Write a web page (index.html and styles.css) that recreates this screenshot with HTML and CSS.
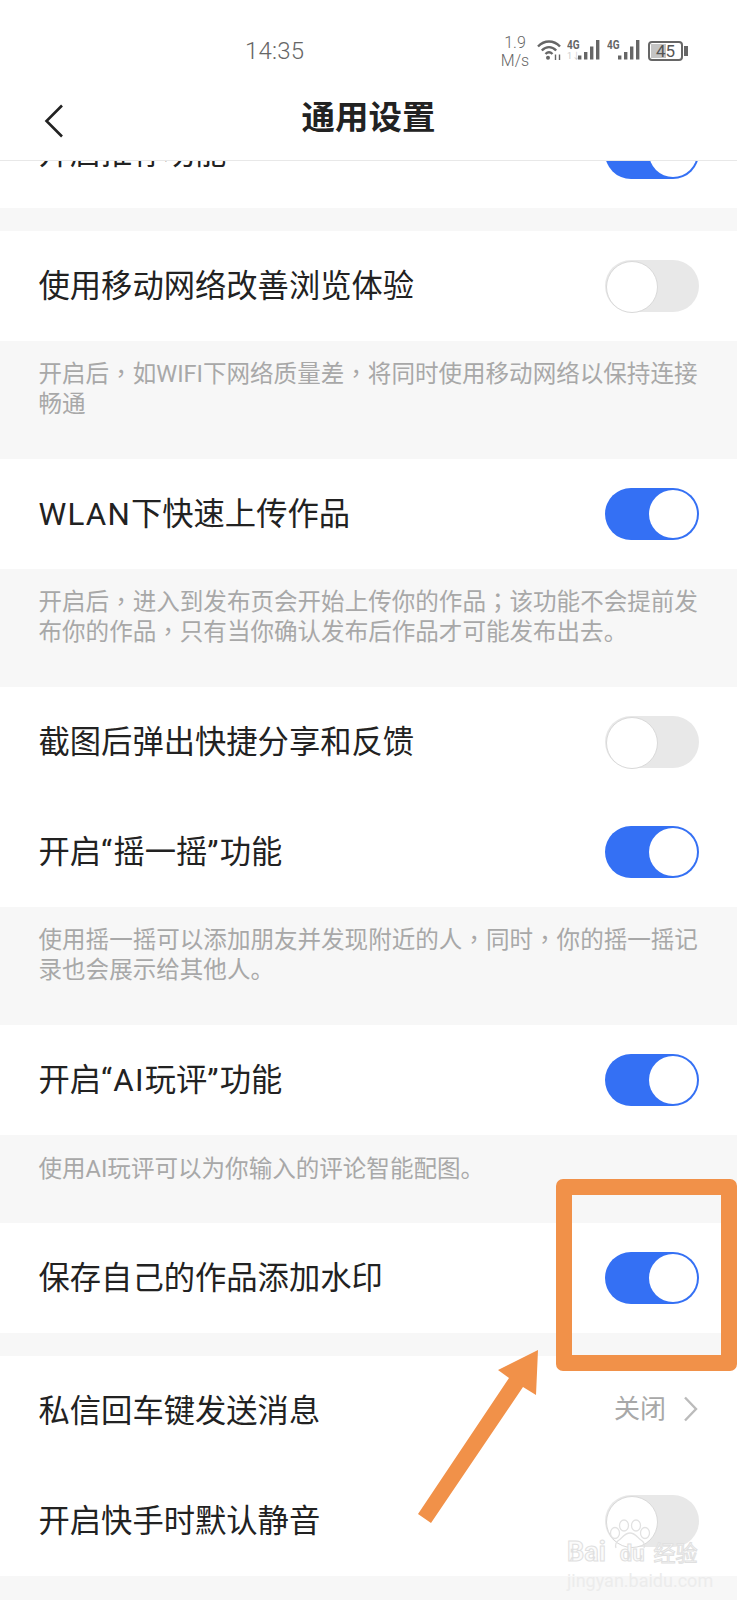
FILE: index.html
```html
<!DOCTYPE html>
<html lang="zh-CN">
<head>
<meta charset="utf-8">
<title>通用设置</title>
<link rel="stylesheet" href="styles.css">
</head>
<body>
<div class="phone">
  <header class="top">
    <div class="status">
      <span class="time">14:35</span>
      <div class="indicators">
        <span class="speed"><span>1.9</span><span>M/s</span></span>
        <svg class="wifi" width="25" height="22" viewBox="0 0 25 22" fill="none" stroke="#666" stroke-width="2.4">
          <path d="M1 7.5C7.5 .8 16.5 .8 23 7.5"/>
          <path d="M4.8 11.5C9.2 7 14.8 7 19.2 11.5"/>
          <path d="M8.5 15C10.8 12.8 13.2 12.8 15.5 15"/>
          <circle cx="11" cy="18.8" r="2" fill="#666" stroke="none"/>
          <path d="M18.5 15.5v5.5M22.5 15.5v5.5" stroke-width="1.4"/>
        </svg>
        <span class="signal">
          <span class="net">4G</span>
          <span class="sub">1↓</span>
          <svg width="22" height="20" viewBox="0 0 22 20" fill="#666">
            <rect x="0" y="15.5" width="3.4" height="4"/><rect x="6" y="12" width="3.4" height="7.5"/><rect x="12" y="6.5" width="3.4" height="13"/><rect x="18" y="0" width="3.4" height="19.5"/>
          </svg>
        </span>
        <span class="signal second">
          <span class="net">4G</span>
          <svg width="22" height="20" viewBox="0 0 22 20" fill="#666">
            <rect x="0" y="15.5" width="3.4" height="4"/><rect x="6" y="12" width="3.4" height="7.5"/><rect x="12" y="6.5" width="3.4" height="13"/><rect x="18" y="0" width="3.4" height="19.5"/>
          </svg>
        </span>
        <span class="battery"><span class="level">45</span></span>
        <span class="nub"></span>
      </div>
    </div>
    <div class="nav">
      <svg class="back" width="20" height="34" viewBox="0 0 20 34" fill="none" stroke="#222" stroke-width="2.6"><path d="M18 1.5 2.5 17 18 32.5"/></svg>
      <h1>通用设置</h1>
    </div>
  </header>

  <main class="list">
    <div class="row first"><span class="label">开启推荐功能</span><span class="toggle on"></span></div>
    <div class="gap"></div>

    <div class="row"><span class="label">使用移动网络改善浏览体验</span><span class="toggle"></span></div>
    <div class="note">
      <p>开启后<span class="p" lang="zh-TW">，</span>如WIFI下网络质量差<span class="p" lang="zh-TW">，</span>将同时使用移动网络以保持连接</p>
      <p>畅通</p>
    </div>

    <div class="row"><span class="label"><span class="lat">WLAN</span>下快速上传作品</span><span class="toggle on"></span></div>
    <div class="note">
      <p>开启后<span class="p" lang="zh-TW">，</span>进入到发布页会开始上传你的作品<span class="p" lang="zh-TW">；</span>该功能不会提前发</p>
      <p>布你的作品<span class="p" lang="zh-TW">，</span>只有当你确认发布后作品才可能发布出去。</p>
    </div>

    <div class="row"><span class="label">截图后弹出快捷分享和反馈</span><span class="toggle"></span></div>
    <div class="row"><span class="label">开启<span class="lat">“</span>摇一摇<span class="lat">”</span>功能</span><span class="toggle on"></span></div>
    <div class="note">
      <p>使用摇一摇可以添加朋友并发现附近的人<span class="p" lang="zh-TW">，</span>同时<span class="p" lang="zh-TW">，</span>你的摇一摇记</p>
      <p>录也会展示给其他人。</p>
    </div>

    <div class="row"><span class="label">开启<span class="lat">“AI</span>玩评<span class="lat">”</span>功能</span><span class="toggle on"></span></div>
    <div class="note single">
      <p>使用AI玩评可以为你输入的评论智能配图。</p>
    </div>

    <div class="row"><span class="label">保存自己的作品添加水印</span><span class="toggle on"></span></div>
    <div class="gap"></div>

    <div class="row"><span class="label">私信回车键发送消息</span>
      <span class="value">关闭
        <svg width="15" height="26" viewBox="0 0 15 26" fill="none" stroke="#bbb" stroke-width="2.4"><path d="M2 1.5 13 13 2 24.5"/></svg>
      </span>
    </div>
    <div class="row"><span class="label">开启快手时默认静音</span><span class="toggle"></span></div>
  </main>

  <div class="highlight"></div>
  <svg class="arrow" width="130" height="180" viewBox="0 0 130 180"><path d="M120 2 118 47 105 39 13 175 0 166 91 30 80 22Z" fill="#f19149"/></svg>

  <div class="watermark">
    <svg class="paw" width="42" height="30" viewBox="0 0 42 30" fill="none" stroke="#e2e2e2" stroke-width="1.3">
      <ellipse cx="6" cy="14" rx="4.5" ry="5.5"/><ellipse cx="15" cy="6.5" rx="4.5" ry="5.5"/><ellipse cx="27" cy="6.5" rx="4.5" ry="5.5"/><ellipse cx="36" cy="14" rx="4.5" ry="5.5"/>
      <path d="M21 14c-5 0-7 4-11 7-3 2-4 5-3 8M21 14c5 0 7 4 11 7 3 2 4 5 3 8"/>
    </svg>
    <div class="brand"><span>Bai</span><span class="du">du</span><span class="jy">经验</span></div>
    <div class="site">jingyan.baidu.com</div>
  </div>
</div>
</body>
</html>
```

FILE: styles.css
```css
* { box-sizing: border-box; }
html, body { margin: 0; padding: 0; }
body {
  width: 737px;
  height: 1600px;
  overflow: hidden;
  background: #f7f7f7;
  font-family: "Roboto", "Noto Sans CJK SC", sans-serif;
  color: #222;
}
.phone { position: relative; width: 737px; height: 1600px; overflow: hidden; display: flex; flex-direction: column; }

.top { position: relative; z-index: 2; height: 161px; background: #fff; border-bottom: 1px solid #e8e8e8; flex: none; }
.status { position: relative; height: 84px; color: #666; }
.time { position: absolute; left: 245px; top: 37px; font-size: 24px; line-height: 28px; font-weight: 300; letter-spacing: .2px; }
.indicators { position: absolute; left: 501px; top: 34px; display: flex; align-items: flex-start; }
.speed { width: 28px; display: flex; flex-direction: column; align-items: center; font-size: 16px; line-height: 17.5px; font-weight: 300; }
.wifi { margin: 5px 0 0 8px; }
.signal { position: relative; width: 33px; margin-left: 5px; height: 20px; margin-top: 6px; }
.signal.second { margin-left: 7px; }
.net { position: absolute; left: 0; top: -1px; font-size: 12.5px; line-height: 11px; font-weight: 700; transform: scaleX(.8); transform-origin: left; }
.sub { position: absolute; left: 0; top: 11px; font-size: 9px; line-height: 10px; color: #ccc; }
.signal svg { position: absolute; right: 0; top: 0; }
.battery { margin: 7px 0 0 8px; width: 35px; height: 20px; border: 2px solid #666; border-radius: 4px; padding: 1px; display: flex; }
.level { flex: 1; background: linear-gradient(90deg, #c4c4c4 50%, transparent 50%); font-size: 17px; line-height: 14px; text-align: center; color: #555; }
.nub { margin: 12px 0 0 1px; width: 4px; height: 10px; background: #666; }

.nav { position: relative; height: 76px; display: flex; justify-content: center; align-items: center; }
.back { position: absolute; left: 44px; top: 20px; }
h1 { margin: 0 0 8px; font-size: 33.5px; line-height: 44px; font-weight: 700; color: #222; }

.list { flex: 1; min-height: 0; overflow: hidden; }
.row {
  height: 110px;
  padding: 0 38px 0 38.5px;
  background: #fff;
  display: flex;
  align-items: center;
  justify-content: space-between;
  font-size: 31.3px;
  font-weight: 400;
}
.label { margin-bottom: 6px; }
.lat { letter-spacing: 1.2px; }
.row.first { margin-top: -63px; }
.gap { height: 23px; }
.note { height: 118px; padding: 18px 0 0 38.5px; font-size: 23.55px; line-height: 30px; color: #a8a8a8; white-space: nowrap; }
.note p { margin: 0; }
.note.single { height: 88px; padding-top: 19px; }
.p { font-family: "Noto Sans CJK TC", sans-serif; line-height: 0; }

.toggle { position: relative; width: 94px; height: 52px; border-radius: 26px; background: #e8e8e8; flex: none; }
.toggle::after {
  content: "";
  position: absolute;
  left: 1px;
  top: 1px;
  width: 50px;
  height: 50px;
  border-radius: 50%;
  background: #fff;
  border: 1.5px solid #d9d9d9;
}
.toggle.on { background: #3470f4; }
.toggle.on::after { left: 44px; top: 2px; width: 48px; height: 48px; border: 0; }

.value { display: flex; align-items: center; gap: 17px; font-size: 26px; line-height: 30px; color: #a8a8a8; margin: 0 1px 4px 0; }

.highlight { position: absolute; z-index: 3; left: 556px; top: 1179px; width: 181px; height: 192px; border: 16px solid #f19149; border-radius: 7px; }
.arrow { position: absolute; z-index: 3; left: 418px; top: 1348px; }

.watermark { position: absolute; z-index: 3; left: 567px; top: 1519px; width: 132px; }
.paw { display: block; margin: 0 0 0 42px; }
.brand { position: relative; display: flex; align-items: baseline; margin-top: -14px; font-size: 27px; line-height: 32px; font-weight: 700; color: #fbfbfb; -webkit-text-stroke: 1px #e0e0e0; }
.brand .du { margin-left: 14px; font-size: 22px; }
.brand .jy { margin-left: 9px; font-size: 22px; font-weight: 400; font-family: "Noto Sans CJK SC", sans-serif; }
.site { margin-top: 2px; font-size: 18px; line-height: 18px; color: #ececec; white-space: nowrap; }
```
